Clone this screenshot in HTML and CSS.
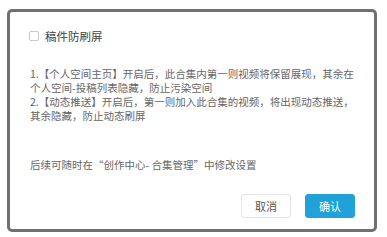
FILE: index.html
```html
<!DOCTYPE html>
<html lang="zh-CN">

<head>
    <meta charset="UTF-8">
    <title>稿件防刷屏</title>
    <link rel="stylesheet" href="styles.css">
</head>

<body>
    <div class="dialog">
        <label class="title-row">
            <span class="checkbox"></span>
            <span class="title">稿件防刷屏</span>
        </label>

        <div class="desc">
            <p>1.【个人空间主页】开启后，此合集内第一则视频将保留展现，其余在个人空间-投稿列表隐藏，防止污染空间</p>
            <p>2.【动态推送】开启后，第一则加入此合集的视频，将出现动态推送，其余隐藏，防止动态刷屏</p>
        </div>

        <p class="tip">后续可随时在“创作中心- 合集管理”中修改设置</p>

        <div class="actions">
            <button class="btn btn-cancel">取消</button>
            <button class="btn btn-ok">确认</button>
        </div>
    </div>
</body>

</html>
```

FILE: styles.css
```css
body {
    margin: 0;
    background-color: #fff;
    font-family: "Noto Sans CJK SC", "Noto Sans", sans-serif;
}

.dialog {
    box-sizing: border-box;
    width: 370px;
    height: 223px;
    margin: 9px 0 0 7px;
    border: 3px solid #717171;
    border-radius: 5px;
    padding: 17px 19px 11px 19px;
    display: flex;
    flex-direction: column;
}

.title-row {
    display: flex;
    align-items: center;
    gap: 6px;
    height: 14px;
}

.checkbox {
    box-sizing: border-box;
    width: 10px;
    height: 10px;
    border: 1px solid #c9c9c9;
    border-radius: 2px;
}

.title {
    font-size: 11.5px;
    line-height: 14px;
    color: #444;
}

.desc {
    margin-top: 24px;
    padding-left: 1px;
    width: 327px;
}

.desc p,
.tip {
    margin: 0;
    font-size: 10.5px;
    line-height: 14px;
    color: #666;
}

.tip {
    margin-top: 35px;
    padding-left: 1px;
}

.actions {
    margin-top: auto;
    display: flex;
    justify-content: flex-end;
    gap: 14px;
}

.btn {
    width: 50px;
    height: 24px;
    border-radius: 3px;
    font-family: inherit;
    font-size: 11px;
    padding: 0;
    cursor: pointer;
}

.btn-cancel {
    background-color: #fff;
    border: 1px solid #e3e3e3;
    color: #555;
}

.btn-ok {
    background-color: #20a2d8;
    border: 1px solid #20a2d8;
    color: #fff;
}
```
